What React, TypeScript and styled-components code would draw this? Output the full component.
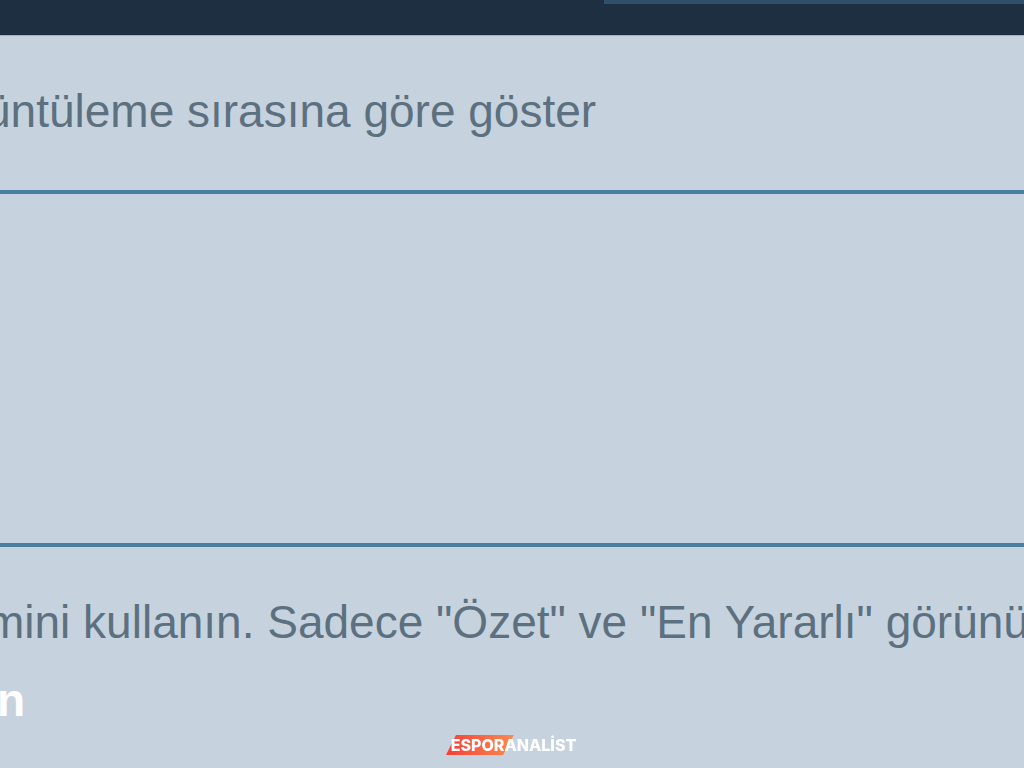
import React from "react";
import styled, { createGlobalStyle } from "styled-components";

const GlobalStyle = createGlobalStyle`
  * { box-sizing: border-box; }
  html, body { margin: 0; background: #c6d3de; overflow: hidden; }
  body { font-family: Arial, "Liberation Sans", sans-serif; }
`;

const Page = styled.main`
  min-height: 100vh;
  overflow: hidden;
  background: #c6d3de;
  color: #5c7080;
`;

const TopBar = styled.header`
  display: flex;
  justify-content: flex-end;
  height: 36px;
  background: #1e2f41;
  border-bottom: 1px solid #a3b1bd;
`;

const TopPanel = styled.div`
  flex: 0 0 41%;
  height: 4px;
  background: #2f4f6a;
`;

const Section = styled.section<{ $height: number }>`
  min-height: ${(p) => p.$height}px;
  padding-top: 47px;
  border-bottom: 4px solid #4a7f9f;
`;

const Footer = styled.section`
  padding-top: 47px;
`;

const Line = styled.p<{ $bleed: number }>`
  margin: 0 0 0 -${(p) => p.$bleed}px;
  font-size: 46px;
  line-height: 56px;
  white-space: nowrap;
`;

const ActionLink = styled.a<{ $bleed: number }>`
  display: block;
  width: max-content;
  margin: 22px 0 0 -${(p) => p.$bleed}px;
  font-size: 46px;
  font-weight: 700;
  line-height: 56px;
  color: #fff;
  text-decoration: none;
`;

const Watermark = styled.div`
  position: fixed;
  bottom: 12px;
  left: 0;
  right: 0;
  display: flex;
  justify-content: center;
`;

const Brand = styled.div`
  position: relative;
  display: flex;
  align-items: center;
  height: 22px;
  padding-left: 5px;
  margin-right: 2px;
`;

const Plate = styled.svg`
  position: absolute;
  left: 0;
  top: 0;
`;

const BrandName = styled.span`
  position: relative;
  font-family: Inter, sans-serif;
  font-size: 16px;
  font-weight: 800;
  line-height: 22px;
  color: #fff;
`;

export default function App() {
  return (
    <Page>
      <GlobalStyle />
      <TopBar>
        <TopPanel />
      </TopBar>
      <Section $height={158}>
        <Line $bleed={15}>üntüleme sırasına göre göster</Line>
      </Section>
      <Section $height={353} />
      <Footer>
        <Line $bleed={14}>mini kullanın. Sadece "Özet" ve "En Yararlı" görünümleri</Line>
        <ActionLink href="#" $bleed={3}>n</ActionLink>
      </Footer>
      <Watermark>
        <Brand>
          <Plate width="68" height="22" viewBox="0 0 68 22" aria-hidden="true">
            <defs>
              <linearGradient id="plate" x1="0" y1="0" x2="1" y2="0">
                <stop offset="0" stopColor="#f43f3c" />
                <stop offset="1" stopColor="#fb8a4e" />
              </linearGradient>
            </defs>
            <path d="M10 1H68L57 21H0Z" fill="url(#plate)" />
          </Plate>
          <BrandName>ESPORANALİST</BrandName>
        </Brand>
      </Watermark>
    </Page>
  );
}
